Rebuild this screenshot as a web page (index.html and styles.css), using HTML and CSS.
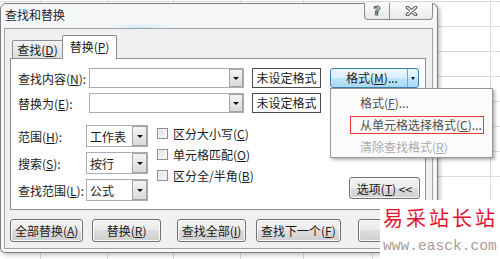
FILE: index.html
```html
<!DOCTYPE html>
<html lang="zh-CN">
<head>
    <meta charset="UTF-8">
    <title>查找和替换</title>
    <link rel="stylesheet" href="styles.css">
</head>
<body>
    <div class="window">
        <div class="titlebar">
            <span class="title">查找和替换</span>
            <div class="caption-btns">
                <div class="cap-btn help">?</div>
                <div class="cap-btn close">
                    <svg width="13" height="10" viewBox="0 0 13 10">
                        <path d="M2.5 1.5 L10.5 8.5 M10.5 1.5 L2.5 8.5" stroke="#555" stroke-width="3.6" stroke-linecap="round"/>
                        <path d="M2.5 1.5 L10.5 8.5 M10.5 1.5 L2.5 8.5" stroke="#fff" stroke-width="1.4" stroke-linecap="round"/>
                    </svg>
                </div>
            </div>
        </div>

        <div class="client">
            <div class="tabs">
                <div class="tab">查找(<u>D</u>)</div>
                <div class="tab active">替换(<u>P</u>)</div>
            </div>

            <div class="panel">
                <div class="row">
                    <span class="label">查找内容(<u>N</u>):</span>
                    <div class="combo"><span class="drop"><i class="arrow"></i></span></div>
                    <div class="fmt-box">未设定格式</div>
                    <div class="split-btn">
                        <span class="split-main">格式(<u>M</u>)...</span>
                        <span class="split-arrow"><i class="arrow"></i></span>
                    </div>
                </div>
                <div class="row">
                    <span class="label">替换为(<u>E</u>):</span>
                    <div class="combo"><span class="drop"><i class="arrow"></i></span></div>
                    <div class="fmt-box">未设定格式</div>
                </div>

                <div class="options">
                    <div class="selects">
                        <div class="opt-row">
                            <span class="opt-label">范围(<u>H</u>):</span>
                            <div class="select">工作表<span class="drop"><i class="arrow"></i></span></div>
                        </div>
                        <div class="opt-row">
                            <span class="opt-label">搜索(<u>S</u>):</span>
                            <div class="select">按行<span class="drop"><i class="arrow"></i></span></div>
                        </div>
                        <div class="opt-row">
                            <span class="opt-label">查找范围(<u>L</u>):</span>
                            <div class="select">公式<span class="drop"><i class="arrow"></i></span></div>
                        </div>
                    </div>
                    <div class="checks">
                        <div class="check-row"><span class="checkbox"></span>区分大小写(<u>C</u>)</div>
                        <div class="check-row"><span class="checkbox"></span>单元格匹配(<u>O</u>)</div>
                        <div class="check-row"><span class="checkbox"></span>区分全/半角(<u>B</u>)</div>
                    </div>
                    <div class="btn options-btn">选项(<u>T</u>) &lt;&lt;</div>
                </div>
            </div>

            <div class="buttons">
                <div class="btn b-all">全部替换(<u>A</u>)</div>
                <div class="btn b-replace">替换(<u>R</u>)</div>
                <div class="btn b-findall">查找全部(<u>I</u>)</div>
                <div class="btn b-next">查找下一个(<u>F</u>)</div>
                <!-- close button, its label sits under the watermark -->
                <div class="btn b-close"></div>
            </div>
        </div>
    </div>

    <!-- dropdown of the format button -->
    <div class="menu">
        <div class="menu-item">格式(<u>F</u>)...</div>
        <div class="menu-item">从单元格选择格式(<u>C</u>)...</div>
        <div class="menu-item disabled">清除查找格式(<u>R</u>)</div>
        <div class="mark"></div>
    </div>

    <div class="watermark">
        <div class="wm-title">易采站长站</div>
        <div class="wm-url">www.easck.com</div>
    </div>
</body>
</html>
```

FILE: styles.css
```css
body {
    margin: 0;
    width: 500px;
    height: 259px;
    overflow: hidden;
    position: relative;
    font-family: "Noto Sans CJK SC", "Liberation Sans", sans-serif;
    font-size: 12px;
    color: #1a1a1a;
    background-color: #fff;
    /* excel grid behind the dialog */
    background-image:
        linear-gradient(#d9dbde, #d9dbde),
        linear-gradient(#d9dbde, #d9dbde),
        linear-gradient(#d9dbde, #d9dbde),
        linear-gradient(#d9dbde, #d9dbde),
        linear-gradient(#d9dbde, #d9dbde),
        linear-gradient(#d9dbde, #d9dbde),
        linear-gradient(#d9dbde, #d9dbde),
        repeating-linear-gradient(to bottom, #d9dbde 0, #d9dbde 1px, transparent 1px, transparent 25px);
    background-size: 1px 100%, 1px 100%, 1px 100%, 1px 100%, 1px 100%, 1px 100%, 1px 100%, 100% 100%;
    background-position: 40px 0, 107px 0, 173px 0, 240px 0, 303px 0, 372px 0, 490px 0, 0 1px;
    background-repeat: no-repeat, no-repeat, no-repeat, no-repeat, no-repeat, no-repeat, no-repeat, repeat;
}

u {
    text-decoration-thickness: 1px;
    text-underline-offset: 1px;
}

.window {
    width: 438px;
    height: 250px;
    margin-top: 3px;
    box-sizing: border-box;
    border: 1px solid #7f7f7f;
    border-radius: 6px 6px 5px 5px;
    background-color: #f5f6f7;
    box-shadow: 2px 2px 4px rgba(0, 0, 0, 0.25);
    display: flex;
    flex-direction: column;
}

.titlebar {
    height: 24px;
    flex-shrink: 0;
    display: flex;
    justify-content: space-between;
    align-items: flex-start;
    background-image: radial-gradient(ellipse 38px 5px at 140px 24px, #cdeefb, rgba(205, 238, 251, 0));
}

.title {
    padding: 4px 0 0 4px;
    line-height: 14px;
    color: #1e1e1e;
}

.caption-btns {
    display: flex;
    margin: -1px 4px 0 0;
}

.cap-btn {
    height: 16px;
    border: 1px solid #8a8a8a;
    border-top: none;
    background: linear-gradient(#fbfbfb, #e9e9e9);
    display: flex;
    align-items: center;
    justify-content: center;
}

.help {
    width: 24px;
    border-right: none;
    border-radius: 0 0 0 4px;
    font-family: "DejaVu Sans", sans-serif;
    font-weight: bold;
    font-size: 12px;
    color: #fff;
    -webkit-text-stroke: 1px #555;
}

.close {
    width: 42px;
    border-radius: 0 0 4px 0;
}

.client {
    flex: 1;
    margin: 0 4px 3px 3px;
    border: 1px solid #a0a4aa;
    background-color: #f0f0f0;
    padding: 6px 6px 0 5px;
}

/* tabs */
.tabs {
    display: flex;
    align-items: flex-end;
    height: 23px;
    padding-left: 2px;
}

.tab {
    width: 49px;
    height: 17px;
    line-height: 17px;
    text-align: center;
    border: 1px solid #898c95;
    border-bottom: none;
    border-radius: 2px 2px 0 0;
    background: linear-gradient(#f3f3f3, #dedede);
}

.tab.active {
    width: 53px;
    height: 23px;
    line-height: 22px;
    margin-left: -1px;
    margin-bottom: -1px;
    background: #fff;
    position: relative;
    z-index: 1;
}

.panel {
    height: 152px;
    box-sizing: border-box;
    border: 1px solid #898c95;
    background-color: #fff;
    padding: 9px 5px 0 7px;
}

.row {
    display: flex;
    align-items: center;
    height: 20px;
}

.row + .row {
    margin-top: 5px;
}

.label {
    width: 71px;
}

.combo {
    width: 155px;
    height: 20px;
    box-sizing: border-box;
    border: 1px solid #abadb3;
    background: #fff;
    display: flex;
    justify-content: flex-end;
}

.drop {
    width: 14px;
    height: 100%;
    box-sizing: border-box;
    border: 1px solid #a2a2a2;
    background: linear-gradient(#f4f4f4, #dadada);
    display: flex;
    align-items: center;
    justify-content: center;
}

.arrow {
    width: 0;
    height: 0;
    border-left: 3px solid transparent;
    border-right: 3px solid transparent;
    border-top: 3px solid #111;
}

.fmt-box {
    width: 69px;
    height: 20px;
    box-sizing: border-box;
    margin-left: 8px;
    border: 1px solid #4a4a4a;
    background: #fff;
    text-align: center;
    line-height: 18px;
}

.split-btn {
    width: 89px;
    height: 20px;
    box-sizing: border-box;
    margin-left: 9px;
    border: 1px solid #3c7fb1;
    border-radius: 3px;
    background: linear-gradient(#eaf6fd 0%, #d9f0fc 50%, #bee6fd 50%, #a7d9f5 100%);
    display: flex;
}

.split-main {
    flex: 1;
    text-align: center;
    line-height: 18px;
    padding-left: 6px;
}

.split-arrow {
    width: 10px;
    border-left: 1px solid #6fa7cf;
    display: flex;
    align-items: center;
    justify-content: center;
}

.split-arrow .arrow {
    border-left-width: 2.5px;
    border-right-width: 2.5px;
}

/* lower part of the panel */
.options {
    display: flex;
    margin-top: 12px;
}

.opt-row {
    display: flex;
    align-items: center;
    height: 22px;
}

.opt-row + .opt-row {
    margin-top: 5px;
}

.opt-label {
    width: 68px;
}

.select {
    width: 62px;
    height: 22px;
    box-sizing: border-box;
    border: 1px solid #abadb3;
    background: #fff;
    display: flex;
    align-items: center;
    justify-content: space-between;
    padding-left: 3px;
}

.select .drop {
    width: 15px;
}

.checks {
    margin: -2px 0 0 9px;
}

.check-row {
    display: flex;
    align-items: center;
    height: 21px;
}

.checkbox {
    width: 11px;
    height: 11px;
    box-sizing: border-box;
    border: 1px solid #8e8f8f;
    background: linear-gradient(135deg, #dcdcdc, #fdfdfd);
    box-shadow: inset 0 0 0 1px #f4f4f4;
    margin-right: 5px;
}

.btn {
    height: 23px;
    box-sizing: border-box;
    border: 1px solid #707070;
    border-radius: 3px;
    background: linear-gradient(#f2f2f2 0%, #ebebeb 50%, #dddddd 50%, #cfcfcf 100%);
    box-shadow: inset 0 0 0 1px #fbfbfb;
    display: flex;
    align-items: center;
    justify-content: center;
    white-space: nowrap;
}

.options-btn {
    width: 71px;
    height: 22px;
    margin-left: auto;
    align-self: flex-end;
    margin-bottom: 2px;
}

.buttons {
    display: flex;
    margin-top: 9px;
}

.b-all { width: 74px; }
.b-replace { width: 69px; margin-left: 9px; }
.b-findall { width: 70px; margin-left: 16px; }
.b-next { width: 85px; margin-left: 10px; }
.b-close { width: 69px; margin-left: 17px; }

/* format dropdown menu */
.menu {
    position: absolute;
    left: 330px;
    top: 88px;
    width: 163px;
    height: 70px;
    box-sizing: border-box;
    border: 1px solid #979797;
    background-color: #fbfbfb;
    box-shadow: 2px 2px 3px rgba(0, 0, 0, 0.3);
    padding-top: 3px;
}

.menu-item {
    height: 22px;
    line-height: 22px;
    padding-left: 29px;
    color: #4d4d4d;
}

.menu-item.disabled {
    color: #ababab;
}

.mark {
    position: absolute;
    left: 19px;
    top: 27px;
    width: 132px;
    height: 16px;
    border: 1px solid #e53a3a;
}

.watermark {
    position: absolute;
    left: 380px;
    top: 200px;
    width: 120px;
    height: 59px;
    background-color: #fff;
}

.wm-title {
    margin-top: 7px;
    padding-left: 3px;
    font-size: 20px;
    line-height: 22px;
    letter-spacing: 3px;
    color: #e8112d;
}

.wm-url {
    margin-top: 10px;
    padding-left: 3px;
    font-family: "Liberation Mono", monospace;
    font-size: 14.6px;
    line-height: 14px;
    color: #b09a9a;
}
```
